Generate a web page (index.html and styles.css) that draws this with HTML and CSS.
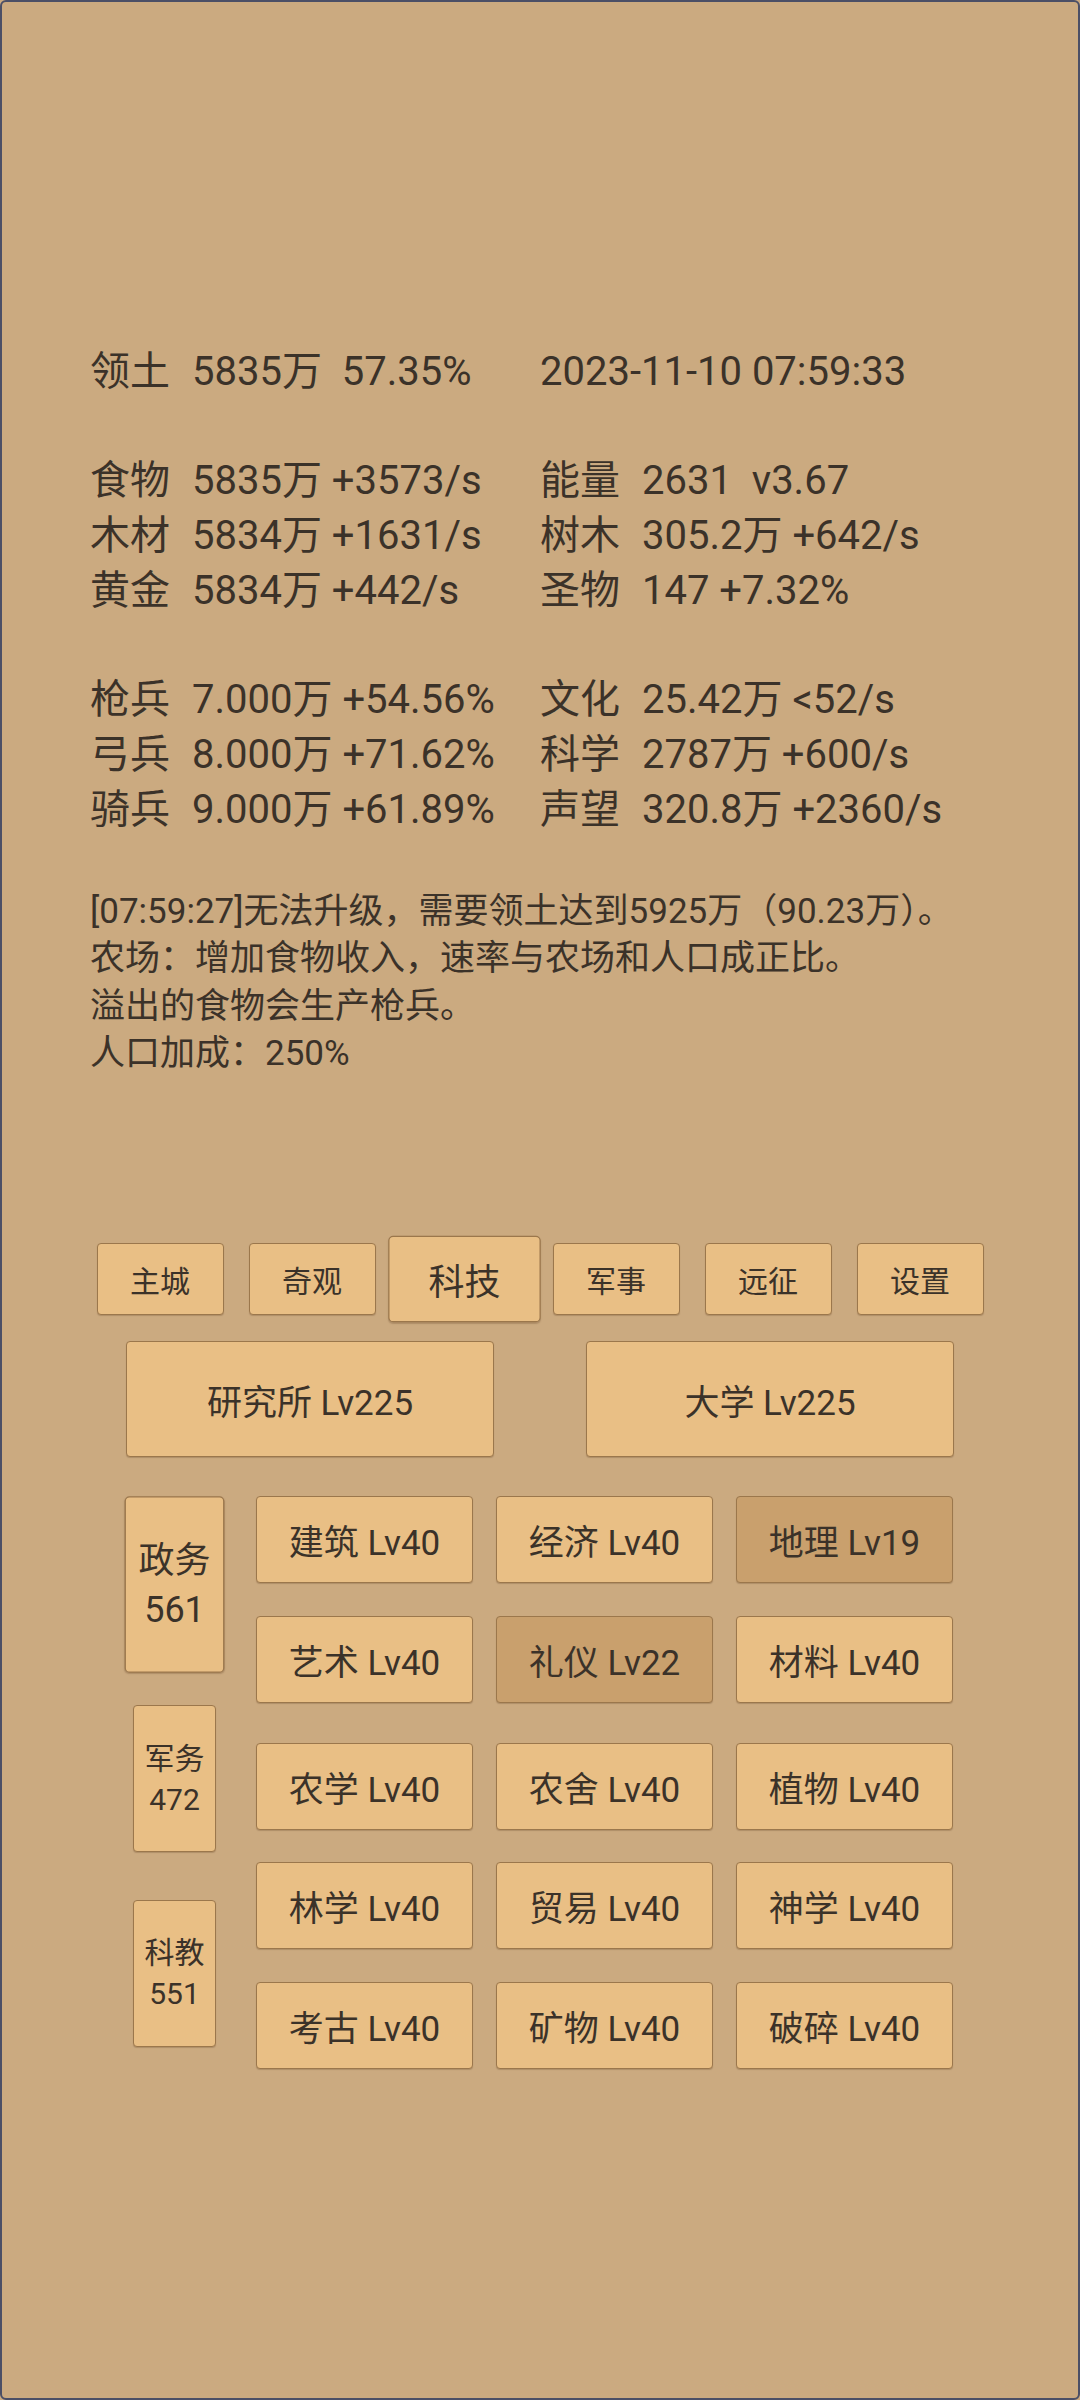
FILE: index.html
```html
<!DOCTYPE html>
<html lang="zh-CN">
<head>
    <meta charset="UTF-8">
    <meta name="viewport" content="width=device-width, initial-scale=1.0">
    <title>科技</title>
    <link rel="stylesheet" href="styles.css">
</head>
<body>
    <div class="screen">
        <div class="stats">
            <div class="stat-block">
                <div class="stat"><span class="lbl">领土</span><span class="val">5835万  57.35%</span></div>
                <div class="stat"><span class="val">2023-11-10 07:59:33</span></div>
            </div>
            <div class="stat-block">
                <div class="stat"><span class="lbl">食物</span><span class="val">5835万 +3573/s</span></div>
                <div class="stat"><span class="lbl">能量</span><span class="val">2631  v3.67</span></div>
                <div class="stat"><span class="lbl">木材</span><span class="val">5834万 +1631/s</span></div>
                <div class="stat"><span class="lbl">树木</span><span class="val">305.2万 +642/s</span></div>
                <div class="stat"><span class="lbl">黄金</span><span class="val">5834万 +442/s</span></div>
                <div class="stat"><span class="lbl">圣物</span><span class="val">147 +7.32%</span></div>
            </div>
            <div class="stat-block">
                <div class="stat"><span class="lbl">枪兵</span><span class="val">7.000万 +54.56%</span></div>
                <div class="stat"><span class="lbl">文化</span><span class="val">25.42万 &lt;52/s</span></div>
                <div class="stat"><span class="lbl">弓兵</span><span class="val">8.000万 +71.62%</span></div>
                <div class="stat"><span class="lbl">科学</span><span class="val">2787万 +600/s</span></div>
                <div class="stat"><span class="lbl">骑兵</span><span class="val">9.000万 +61.89%</span></div>
                <div class="stat"><span class="lbl">声望</span><span class="val">320.8万 +2360/s</span></div>
            </div>
        </div>

        <div class="log">
            <p>[07:59:27]无法升级，需要领土达到5925万（90.23万）。</p>
            <p>农场：增加食物收入，速率与农场和人口成正比。</p>
            <p>溢出的食物会生产枪兵。</p>
            <p>人口加成：250%</p>
        </div>

        <div class="tabs">
            <div class="btn tab">主城</div>
            <div class="btn tab">奇观</div>
            <div class="btn tab active">科技</div>
            <div class="btn tab">军事</div>
            <div class="btn tab">远征</div>
            <div class="btn tab">设置</div>
        </div>

        <div class="buildings">
            <div class="btn building">研究所 Lv225</div>
            <div class="btn building">大学 Lv225</div>
        </div>

        <div class="tech">
            <div class="cats">
                <div class="btn cat active">政务<br>561</div>
                <div class="btn cat">军务<br>472</div>
                <div class="btn cat">科教<br>551</div>
            </div>
            <div class="groups">
                <div class="group">
                    <div class="btn cell">建筑 Lv40</div>
                    <div class="btn cell">经济 Lv40</div>
                    <div class="btn cell low">地理 Lv19</div>
                    <div class="btn cell">艺术 Lv40</div>
                    <div class="btn cell low">礼仪 Lv22</div>
                    <div class="btn cell">材料 Lv40</div>
                </div>
                <div class="group">
                    <div class="btn cell">农学 Lv40</div>
                    <div class="btn cell">农舍 Lv40</div>
                    <div class="btn cell">植物 Lv40</div>
                    <div class="btn cell">林学 Lv40</div>
                    <div class="btn cell">贸易 Lv40</div>
                    <div class="btn cell">神学 Lv40</div>
                    <div class="btn cell">考古 Lv40</div>
                    <div class="btn cell">矿物 Lv40</div>
                    <div class="btn cell">破碎 Lv40</div>
                </div>
            </div>
        </div>
    </div>
</body>
</html>
```

FILE: styles.css
```css
body {
    margin: 0;
    font-family: Roboto, "Noto Sans CJK SC", sans-serif;
    color: #3b3229;
    background-color: #cbaa80;
}
.screen {
    height: 2400px;
    box-sizing: border-box;
    border: 2px solid #4b4f66;
    border-radius: 6px;
    background-color: #cbaa80;
    padding-top: 343px;
}
.stats {
    padding-left: 88px;
    font-size: 40px;
    line-height: 54.7px;
}
.stat-block {
    display: grid;
    grid-template-columns: 450px 450px;
    margin-bottom: 54.7px;
}
.stat {
    white-space: pre;
}
.lbl {
    display: inline-block;
    width: 102px;
}
.log {
    margin-top: -4px;
    padding-left: 88px;
    font-size: 35px;
    line-height: 47.3px;
}
.log p {
    margin: 0;
}
.btn {
    display: flex;
    align-items: center;
    justify-content: center;
    text-align: center;
    box-sizing: border-box;
    background-color: #e9bf85;
    border: 1px solid #9b774c;
    border-radius: 4px;
    box-shadow: 0 1px 1px rgba(90, 60, 30, 0.25);
}
.tabs {
    display: flex;
    justify-content: center;
    gap: 25px;
    margin-top: 166px;
}
.tab {
    width: 127px;
    height: 72px;
    font-size: 30px;
}
.active {
    transform: scale(1.2);
}
.buildings {
    display: flex;
    justify-content: center;
    gap: 92px;
    margin-top: 26px;
}
.building {
    width: 368px;
    height: 116px;
    font-size: 35px;
}
.tech {
    display: flex;
    gap: 40px;
    margin-top: 39px;
    padding-left: 131px;
}
.cats {
    display: flex;
    flex-direction: column;
    gap: 47.5px;
    padding-top: 14.5px;
}
.cat {
    width: 83px;
    height: 147px;
    font-size: 30px;
    line-height: 41px;
}
.groups {
    display: flex;
    flex-direction: column;
    gap: 40px;
}
.group {
    display: grid;
    grid-template-columns: repeat(3, 217px);
    grid-auto-rows: 87px;
    column-gap: 23px;
    row-gap: 32.5px;
}
.cell {
    font-size: 35px;
}
.low {
    background-color: #c9a06d;
}
```
